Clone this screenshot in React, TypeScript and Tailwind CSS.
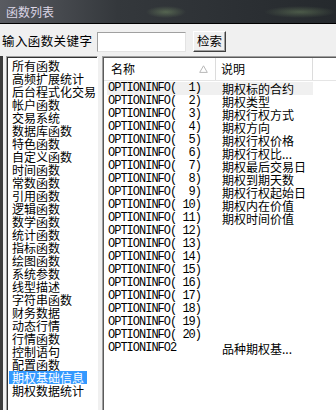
import React from "react";

const categories = [
  "所有函数",
  "高频扩展统计",
  "后台程式化交易",
  "帐户函数",
  "交易系统",
  "数据库函数",
  "特色函数",
  "自定义函数",
  "时间函数",
  "常数函数",
  "引用函数",
  "逻辑函数",
  "数学函数",
  "统计函数",
  "指标函数",
  "绘图函数",
  "系统参数",
  "线型描述",
  "字符串函数",
  "财务数据",
  "动态行情",
  "行情函数",
  "控制语句",
  "配置函数",
  "期权基础信息",
  "期权数据统计",
];

const descs = [
  "期权标的合约",
  "期权类型",
  "期权行权方式",
  "期权方向",
  "期权行权价格",
  "期权行权比...",
  "期权最后交易日",
  "期权到期天数",
  "期权行权起始日",
  "期权内在价值",
  "期权时间价值",
];

type Row = { name: string; desc: string };

const rows: Row[] = [
  ...Array.from({ length: 20 }, (_, i) => ({
    name: `OPTIONINFO(${String(i + 1).padStart(3, " ")})`,
    desc: descs[i] ?? "",
  })),
  { name: "OPTIONINFO2", desc: "品种期权基..." },
];

const SortArrow = () => (
  <svg width="9" height="8" viewBox="0 0 9 8" className="shrink-0">
    <path d="M4.5 0.8 L8.3 7.4 L0.7 7.4 Z" fill="none" stroke="#b8b8b8" strokeWidth="1" />
  </svg>
);

export default function App() {
  return (
    <div className="w-[336px] h-[410px] overflow-hidden bg-[#f0f0f0] flex flex-col font-['Noto_Sans_CJK_SC',sans-serif] text-black">
      {/* title bar */}
      <div className="h-[24px] shrink-0 border-b border-black flex items-center pl-[6px] text-[12px] leading-none text-[#dcd6e6] bg-[radial-gradient(ellipse_20px_6px_at_166px_12px,rgba(130,160,110,0.45),transparent),radial-gradient(ellipse_36px_6px_at_300px_12px,rgba(130,160,110,0.4),transparent),linear-gradient(to_right,#595b61,#34383c_35%,#25292d)]">
        函数列表
      </div>

      {/* search row */}
      <div className="flex items-center h-[21px] mt-[7px] pl-[2px] shrink-0">
        <span className="w-[95px] text-[12.5px] leading-none tracking-[0.4px]">输入函数关键字</span>
        <input
          type="text"
          className="w-[89px] h-[20px] bg-white border border-t-[#a0a0a0] border-l-[#a0a0a0] border-b-[#e3e3e3] border-r-[#e3e3e3] outline-none px-1 text-[12px]"
        />
        <button className="ml-[7px] w-[33px] h-[21px] bg-[#f0f0f0] border border-t-white border-l-white border-b-[#404040] border-r-[#404040] shadow-[inset_-1px_-1px_0_#a0a0a0] text-[12.5px] leading-none">
          检索
        </button>
      </div>

      {/* panels */}
      <div className="flex flex-1 min-h-0 mt-[4px] border-l-[3px] border-[#3c3c3c]">
        {/* category list */}
        <div className="ml-[3px] w-[92px] border-t border-l border-[#a0a0a0] border-r border-r-white">
          <div className="h-full bg-white border-t border-l border-[#303030] pl-[1px] pt-[1px]">
            {categories.map((c) => (
              <div key={c} className="h-[13px] text-[12px] leading-[13px] whitespace-nowrap">
                <span
                  className={
                    c === "期权基础信息"
                      ? "inline-block px-[3px] bg-[#3399ff] text-white"
                      : "inline-block px-[3px]"
                  }
                >
                  {c}
                </span>
              </div>
            ))}
          </div>
        </div>

        {/* function list view */}
        <div className="ml-[4px] flex-1 border-t border-l border-[#a0a0a0]">
          <div className="h-full bg-white border-t border-l border-[#5a5a5a]">
            <div className="h-[23px] flex border-b border-[#e5e5e5] text-[12px]">
              <div className="w-[112px] flex items-center pl-[7px] pr-[7px] border-r border-[#dcdcdc]">
                <span className="flex-1">名称</span>
                <SortArrow />
              </div>
              <div className="w-[97px] flex items-center pl-[5px] border-r border-[#dcdcdc]">说明</div>
              <div className="flex-1" />
            </div>
            <div className="pt-[1px]">
              {rows.map((r, i) => (
                <div
                  key={r.name}
                  className={
                    i === 0
                      ? "ml-[3px] w-[206px] h-[13px] flex items-center bg-[#f0f0f0]"
                      : "ml-[3px] w-[206px] h-[13px] flex items-center"
                  }
                >
                  <span className="w-[115px] pl-[1px] font-['Liberation_Mono',monospace] text-[12px] tracking-[-1px] whitespace-pre leading-[13px]">
                    {r.name}
                  </span>
                  <span className="text-[12px] leading-[13px] whitespace-nowrap">{r.desc}</span>
                </div>
              ))}
            </div>
          </div>
        </div>
      </div>
    </div>
  );
}
